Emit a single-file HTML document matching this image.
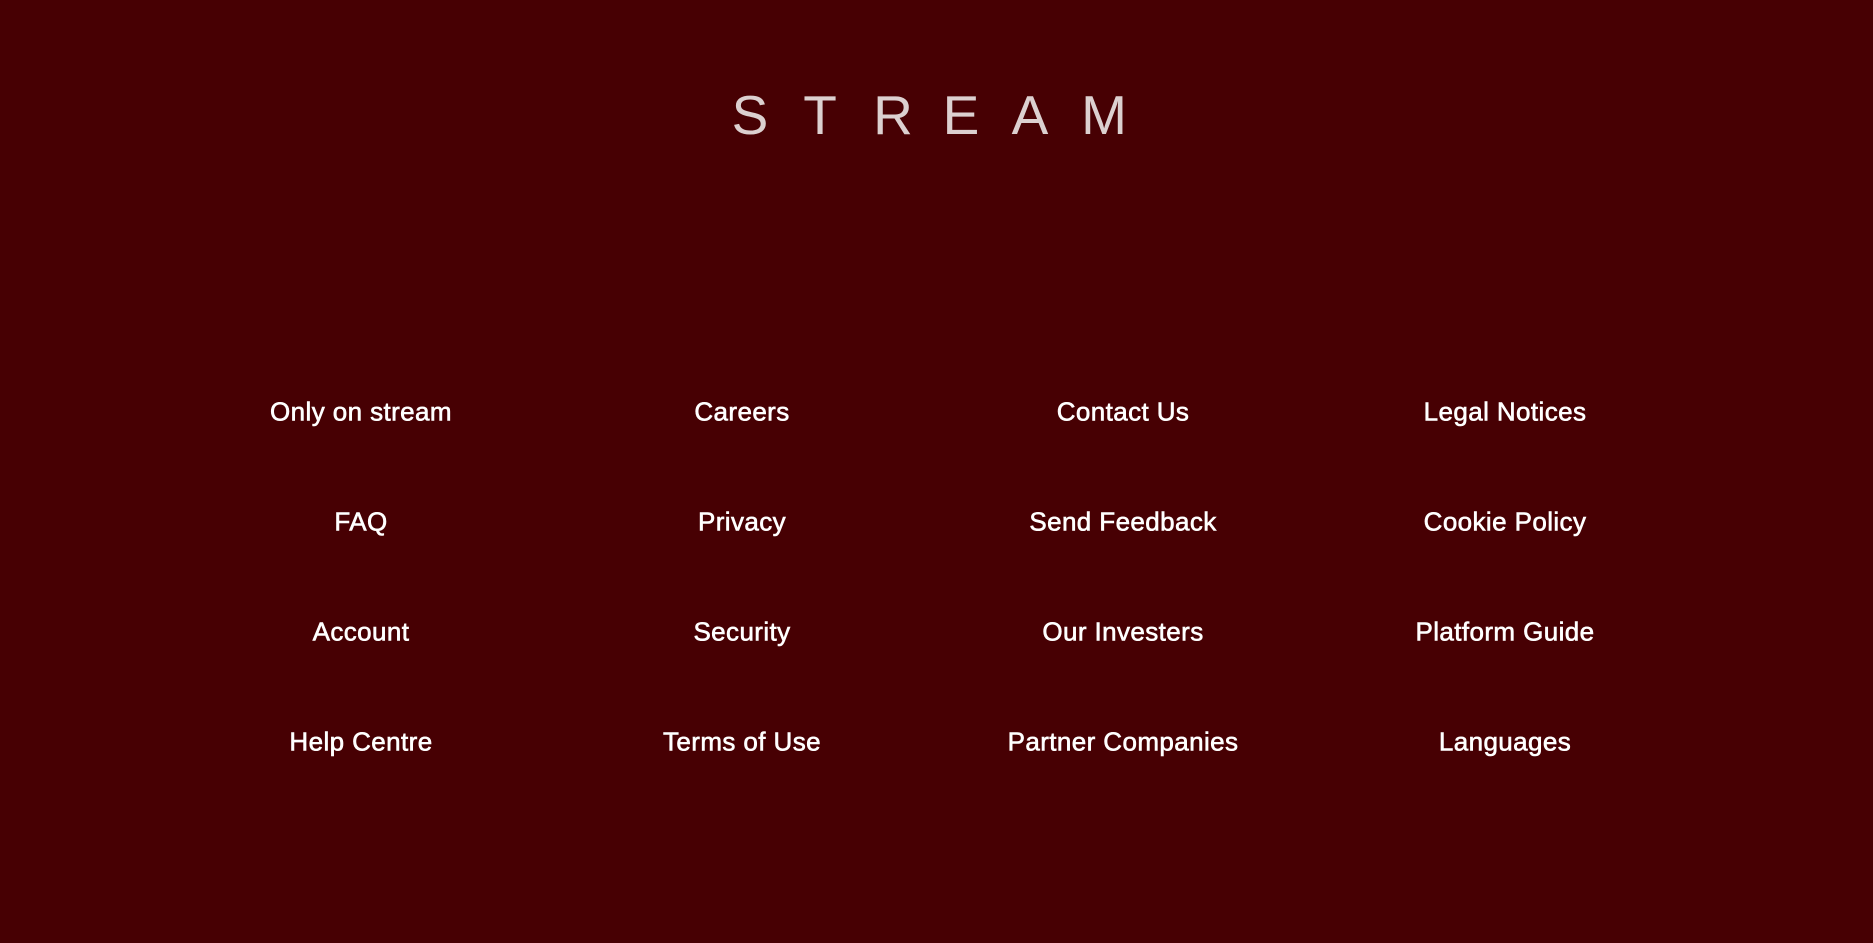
<!DOCTYPE html>
<html><head><meta charset="utf-8"><style>
html,body{margin:0;padding:0;width:1873px;height:943px;background:#470003;overflow:hidden}
.t{position:absolute;top:80px;font-family:"Liberation Sans",sans-serif;font-size:55px;font-weight:300;color:#dcd0d0;transform:translateX(-50%);line-height:70px}
.l{position:absolute;font-family:"Liberation Sans",sans-serif;font-size:26px;letter-spacing:0.4px;color:#fff;-webkit-text-stroke:0.6px #fff;transform:translate(-50%,-50%);white-space:nowrap}
</style></head><body>
<span class="t" style="left:750px">S</span>
<span class="t" style="left:820px">T</span>
<span class="t" style="left:893px">R</span>
<span class="t" style="left:961px">E</span>
<span class="t" style="left:1030px">A</span>
<span class="t" style="left:1104px">M</span>

<span class="l" style="left:361px;top:412px">Only on stream</span>
<span class="l" style="left:742px;top:412px">Careers</span>
<span class="l" style="left:1123px;top:412px">Contact Us</span>
<span class="l" style="left:1505px;top:412px">Legal Notices</span>

<span class="l" style="left:361px;top:522px">FAQ</span>
<span class="l" style="left:742px;top:522px">Privacy</span>
<span class="l" style="left:1123px;top:522px">Send Feedback</span>
<span class="l" style="left:1505px;top:522px">Cookie Policy</span>

<span class="l" style="left:361px;top:632px">Account</span>
<span class="l" style="left:742px;top:632px">Security</span>
<span class="l" style="left:1123px;top:632px">Our Investers</span>
<span class="l" style="left:1505px;top:632px">Platform Guide</span>

<span class="l" style="left:361px;top:742px">Help Centre</span>
<span class="l" style="left:742px;top:742px">Terms of Use</span>
<span class="l" style="left:1123px;top:742px">Partner Companies</span>
<span class="l" style="left:1505px;top:742px">Languages</span>
</body></html>
